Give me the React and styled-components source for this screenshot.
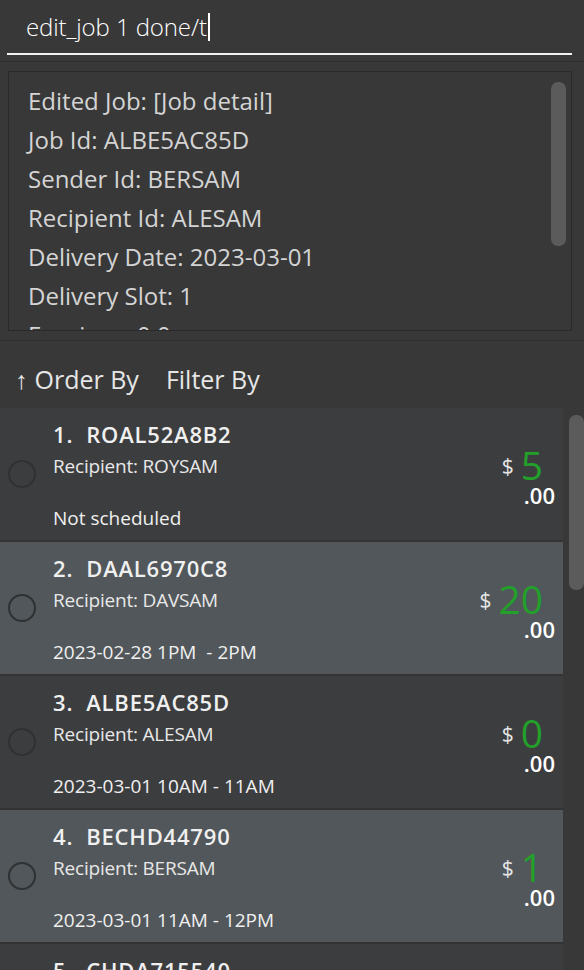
import React from "react";
import styled, { createGlobalStyle } from "styled-components";

const Global = createGlobalStyle`
  html, body { margin: 0; padding: 0; background: #383838; }
  body { font-family: "Segoe UI", "Open Sans", sans-serif; overflow: hidden; }
`;

const Page = styled.div`
  width: 584px;
  height: 970px;
  display: flex;
  flex-direction: column;
  background: #383838;
  overflow: hidden;
`;

const CommandBar = styled.div`
  height: 62px;
  padding: 0 12px 0 7px;
  border-bottom: 1px solid #2e2e2e;
  box-sizing: border-box;
`;

const CommandInput = styled.div`
  height: 55px;
  box-sizing: border-box;
  border-bottom: 2px solid #f2f2f2;
  padding-left: 19px;
  display: flex;
  align-items: center;
  color: #ffffff;
  font-size: 24px;
  font-weight: 300;
  letter-spacing: -0.1px;
`;

const Caret = styled.span`
  display: inline-block;
  width: 2px;
  height: 28px;
  background: #ffffff;
  margin-left: 1px;
`;

const ResultSection = styled.div`
  padding: 9px 12px 9px 8px;
  border-bottom: 1px solid #2e2e2e;
`;

const ResultBox = styled.div`
  position: relative;
  height: 260px;
  box-sizing: border-box;
  border: 1px solid #2a2a2a;
  overflow: hidden;
  padding: 9px 0 0 19px;
`;

const ResultLine = styled.div`
  color: #d4d4d4;
  font-size: 24px;
  line-height: 39px;
  letter-spacing: 0;
`;

const ScrollThumb = styled.div`
  position: absolute;
  top: ${(p) => p.$top}px;
  right: ${(p) => p.$right}px;
  width: 15px;
  height: ${(p) => p.$h}px;
  border-radius: 7px;
  background: #5b5b5b;
`;

const Toolbar = styled.div`
  height: 67px;
  display: flex;
  align-items: center;
  gap: 27px;
  padding: 8px 0 0 15px;
  box-sizing: border-box;
  color: #e6e6e6;
  font-size: 25px;
  letter-spacing: 0;
`;

const ToolItem = styled.span`
  display: flex;
  align-items: center;
`;

const Arrow = styled.span`
  font-size: 25px;
  font-weight: 300;
  margin-right: 7px;
`;

const ListArea = styled.div`
  position: relative;
  flex: 1;
  overflow: hidden;
`;

const List = styled.div`
  width: 563px;
  display: flex;
  flex-direction: column;
  gap: 2px;
  background: #333333;
`;

const Card = styled.div`
  height: 132px;
  display: grid;
  grid-template-columns: 53px 1fr auto;
  background: ${(p) => (p.$alt ? "#51575a" : "#3c3d3f")};
  color: #ffffff;
`;

const RadioCell = styled.div`
  display: flex;
  align-items: center;
  padding: 0 0 0 8px;
`;

const Radio = styled.div`
  width: 28px;
  height: 28px;
  border-radius: 50%;
  border: 2.5px solid #2f3133;
  box-sizing: border-box;
`;

const Info = styled.div`
  display: flex;
  flex-direction: column;
  padding-top: 11px;
`;

const Title = styled.div`
  font-size: 22px;
  font-weight: 600;
  line-height: 30px;
  color: #f0f0f0;
  letter-spacing: 0.8px;
  white-space: pre;
`;

const Recipient = styled.div`
  margin-top: 2px;
  font-size: 19px;
  line-height: 30px;
  color: #e8e8e8;
  letter-spacing: -0.2px;
`;

const Schedule = styled.div`
  margin-top: 22px;
  font-size: 19px;
  line-height: 30px;
  color: #f0f0f0;
  letter-spacing: 0;
  white-space: pre;
`;

const Price = styled.div`
  display: flex;
  flex-direction: column;
  align-items: flex-end;
  padding: 35px 8px 0 0;
`;

const Amount = styled.div`
  display: flex;
  align-items: center;
  gap: 7px;
  height: 44px;
  margin-right: 12px;
`;

const Dollar = styled.span`
  font-size: 21px;
  color: #e6e6e6;
  margin-top: 2px;
`;

const Whole = styled.span`
  font-size: 39px;
  color: #22a02a;
  line-height: 44px;
`;

const Cents = styled.div`
  font-size: 22px;
  font-weight: 600;
  color: #ffffff;
  line-height: 26px;
  margin-top: -5px;
`;

const jobs = [
  { n: 1, id: "ROAL52A8B2", r: "ROYSAM", s: "Not scheduled", p: "5" },
  { n: 2, id: "DAAL6970C8", r: "DAVSAM", s: "2023-02-28 1PM  - 2PM", p: "20" },
  { n: 3, id: "ALBE5AC85D", r: "ALESAM", s: "2023-03-01 10AM - 11AM", p: "0" },
  { n: 4, id: "BECHD44790", r: "BERSAM", s: "2023-03-01 11AM - 12PM", p: "1" },
  { n: 5, id: "CHDA715540", r: "CHASAM", s: "2023-03-02 1PM  - 2PM", p: "3" },
];

const results = [
  "Edited Job: [Job detail]",
  "Job Id: ALBE5AC85D",
  "Sender Id: BERSAM",
  "Recipient Id: ALESAM",
  "Delivery Date: 2023-03-01",
  "Delivery Slot: 1",
  "Earnings: 0.0",
];

export default function App() {
  return (
    <Page>
      <Global />
      <CommandBar>
        <CommandInput>
          edit_job 1 done/t<Caret />
        </CommandInput>
      </CommandBar>
      <ResultSection>
        <ResultBox>
          {results.map((r) => (
            <ResultLine key={r}>{r}</ResultLine>
          ))}
          <ScrollThumb $top={10} $right={5} $h={164} />
        </ResultBox>
      </ResultSection>
      <Toolbar>
        <ToolItem>
          <Arrow>↑</Arrow>Order By
        </ToolItem>
        <ToolItem>Filter By</ToolItem>
      </Toolbar>
      <ListArea>
        <List>
          {jobs.map((j, i) => (
            <Card key={j.n} $alt={i % 2 === 1}>
              <RadioCell>
                <Radio />
              </RadioCell>
              <Info>
                <Title>{`${j.n}.  ${j.id}`}</Title>
                <Recipient>Recipient: {j.r}</Recipient>
                <Schedule>{j.s}</Schedule>
              </Info>
              <Price>
                <Amount>
                  <Dollar>$</Dollar>
                  <Whole>{j.p}</Whole>
                </Amount>
                <Cents>.00</Cents>
              </Price>
            </Card>
          ))}
        </List>
        <ScrollThumb $top={7} $right={0} $h={175} />
      </ListArea>
    </Page>
  );
}
